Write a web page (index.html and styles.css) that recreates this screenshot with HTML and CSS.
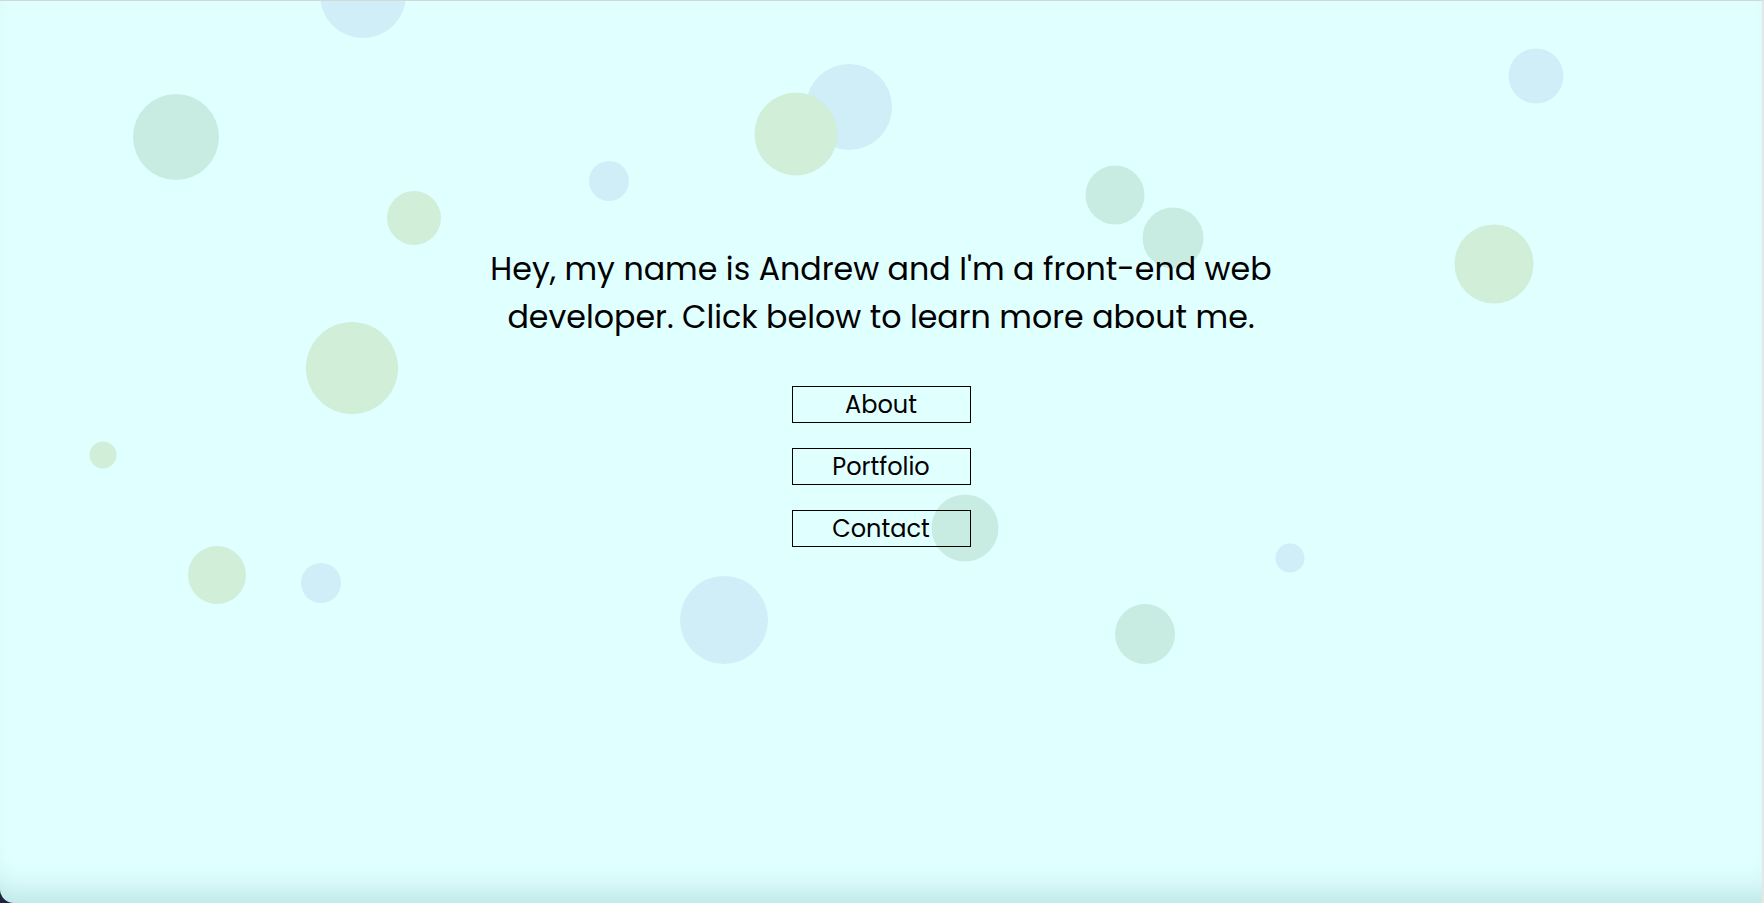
FILE: index.html
```html
<!DOCTYPE html>
<html lang="en">
<head>
    <meta charset="UTF-8">
    <meta name="viewport" content="width=device-width, initial-scale=1.0">
    <title>Andrew</title>
    <link rel="stylesheet" href="styles.css">
</head>
<body>
    <div class="page">
        <div class="bubbles">
            <span class="bubble blue b1"></span>
            <span class="bubble teal b2"></span>
            <span class="bubble green b3"></span>
            <span class="bubble blue b4"></span>
            <span class="bubble blue b5"></span>
            <span class="bubble green b6"></span>
            <span class="bubble teal b7"></span>
            <span class="bubble teal b8"></span>
            <span class="bubble blue b9"></span>
            <span class="bubble green b10"></span>
            <span class="bubble green b11"></span>
            <span class="bubble green b12"></span>
            <span class="bubble green b13"></span>
            <span class="bubble blue b14"></span>
            <span class="bubble blue b15"></span>
            <span class="bubble teal b16"></span>
            <span class="bubble blue b17"></span>
            <span class="bubble teal b18"></span>
        </div>
        <main class="intro">
            <p class="intro-text">Hey, my name is Andrew and I'm a front-end web developer. Click below to learn more about me.</p>
            <nav class="links">
                <a href="#about" class="link-btn">About</a>
                <a href="#portfolio" class="link-btn">Portfolio</a>
                <a href="#contact" class="link-btn">Contact</a>
            </nav>
        </main>
    </div>
</body>
</html>
```

FILE: styles.css
```css
html, body {
    margin: 0;
    height: 100%;
}

body {
    background-color: #1c2442;
    font-family: 'Poppins', 'Inter', sans-serif;
    overflow: hidden;
}

.page {
    position: relative;
    box-sizing: border-box;
    height: 100%;
    background-color: #e0ffff;
    border-top: 1px solid #d6d6d6;
    border-right: 2px solid #e6e6e6;
    border-bottom-left-radius: 14px;
    box-shadow: inset 0 -28px 24px -14px rgba(0, 90, 90, 0.14);
    overflow: hidden;
}

/* background bubbles */
.bubbles {
    position: absolute;
    inset: 0;
}

.bubble {
    position: absolute;
    border-radius: 50%;
    transform: translate(-50%, -50%);
}

.blue  { background-color: #d0eef8; }
.green { background-color: #d0eed8; }
.teal  { background-color: #c8ece2; }

.b1  { left: 363px;  top: -6px;  width: 86px; height: 86px; }
.b2  { left: 176px;  top: 136px; width: 86px; height: 86px; }
.b3  { left: 414px;  top: 217px; width: 54px; height: 54px; }
.b4  { left: 609px;  top: 180px; width: 40px; height: 40px; }
.b5  { left: 849px;  top: 106px; width: 86px; height: 86px; }
.b6  { left: 796px;  top: 133px; width: 83px; height: 83px; }
.b7  { left: 1115px; top: 194px; width: 59px; height: 59px; }
.b8  { left: 1173px; top: 237px; width: 61px; height: 61px; }
.b9  { left: 1536px; top: 75px;  width: 55px; height: 55px; }
.b10 { left: 1494px; top: 263px; width: 79px; height: 79px; }
.b11 { left: 352px;  top: 367px; width: 92px; height: 92px; }
.b12 { left: 103px;  top: 454px; width: 27px; height: 27px; }
.b13 { left: 217px;  top: 574px; width: 58px; height: 58px; }
.b14 { left: 321px;  top: 582px; width: 40px; height: 40px; }
.b15 { left: 724px;  top: 619px; width: 88px; height: 88px; }
.b16 { left: 965px;  top: 527px; width: 67px; height: 67px; }
.b17 { left: 1290px; top: 557px; width: 29px; height: 29px; }
.b18 { left: 1145px; top: 633px; width: 60px; height: 60px; }

/* content */
.intro {
    position: relative;
    display: flex;
    flex-direction: column;
    align-items: center;
    padding-top: 244px;
}

.intro-text {
    margin: 0;
    max-width: 820px;
    font-size: 31.7px;
    line-height: 48px;
    text-align: center;
    color: #000;
}

.links {
    display: flex;
    flex-direction: column;
    gap: 25px;
    margin-top: 45px;
}

.link-btn {
    display: block;
    width: 177px;
    height: 35px;
    line-height: 36px;
    border: 1px solid #000;
    font-size: 24px;
    text-align: center;
    text-decoration: none;
    color: #000;
}
```
